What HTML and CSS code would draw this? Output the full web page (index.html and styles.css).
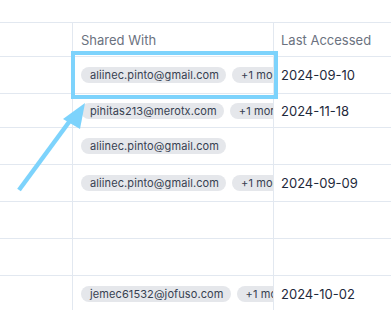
FILE: index.html
```html
<!DOCTYPE html>
<html>
<head>
<meta charset="utf-8">
<link rel="stylesheet" href="styles.css">
</head>
<body>
<div class="page">
  <div class="table">
    <div class="row head">
      <div class="cell"></div>
      <div class="cell">Shared With</div>
      <div class="cell">Last Accessed</div>
    </div>
    <div class="row">
      <div class="cell"></div>
      <div class="cell"><span class="chip">aliinec.pinto@gmail.com</span><span class="chip">+1 more</span></div>
      <div class="cell date">2024-09-10</div>
    </div>
    <div class="row short">
      <div class="cell"></div>
      <div class="cell"><span class="chip">pihitas213@merotx.com</span><span class="chip">+1 more</span></div>
      <div class="cell date">2024-11-18</div>
    </div>
    <div class="row">
      <div class="cell"></div>
      <div class="cell"><span class="chip">aliinec.pinto@gmail.com</span></div>
      <div class="cell date"></div>
    </div>
    <div class="row">
      <div class="cell"></div>
      <div class="cell"><span class="chip">aliinec.pinto@gmail.com</span><span class="chip">+1 more</span></div>
      <div class="cell date">2024-09-09</div>
    </div>
    <div class="row">
      <div class="cell"></div>
      <div class="cell"></div>
      <div class="cell date"></div>
    </div>
    <div class="row">
      <div class="cell"></div>
      <div class="cell"></div>
      <div class="cell date"></div>
    </div>
    <div class="row">
      <div class="cell"></div>
      <div class="cell"><span class="chip">jemec61532@jofuso.com</span><span class="chip">+1 more</span></div>
      <div class="cell date">2024-10-02</div>
    </div>
  </div>
  <div class="highlight"></div>
  <svg class="arrow" width="100" height="200" viewBox="0 0 100 200">
    <line x1="19" y1="190" x2="72" y2="118" stroke="#7dd3fc" stroke-width="4.5"/>
    <polygon points="85,103 63,119 80,129" fill="#7dd3fc"/>
  </svg>
</div>
</body>
</html>
```
FILE: styles.css
```css
html, body {
  margin: 0;
  padding: 0;
  background: #ffffff;
}
body {
  width: 391px;
  height: 310px;
  overflow: hidden;
  font-family: Inter, "Noto Sans", sans-serif;
}
.page {
  position: relative;
  padding-top: 22px;
}
.table {
  border-top: 1px solid #e2e8f0;
}
.row {
  display: grid;
  grid-template-columns: 73px 201px 1fr;
  height: 37px;
  box-sizing: border-box;
  border-bottom: 1px solid #e2e8f0;
}
.row.head {
  height: 34px;
}
.row.short {
  height: 34px;
}
.cell {
  display: flex;
  align-items: center;
  gap: 6px;
  padding: 0 8px;
  overflow: hidden;
  white-space: nowrap;
  border-right: 1px solid #e2e8f0;
  min-width: 0;
}
.cell:last-child {
  border-right: none;
  padding-left: 7px;
}
.head .cell {
  font-size: 13px;
  color: #6b7280;
  padding-top: 1px;
}
.date {
  font-size: 13px;
  color: #1e293b;
}
.chip {
  flex-shrink: 0;
  display: inline-flex;
  align-items: center;
  height: 16px;
  padding: 0 7px 0 9px;
  border-radius: 8px;
  background: #e5e7eb;
  color: #374151;
  font-size: 11px;
  letter-spacing: 0.1px;
}
.highlight {
  position: absolute;
  left: 71px;
  top: 51px;
  width: 199px;
  height: 40px;
  border: 4px solid #7dd3fc;
}
.arrow {
  position: absolute;
  left: 0;
  top: 0;
  overflow: visible;
}
```
